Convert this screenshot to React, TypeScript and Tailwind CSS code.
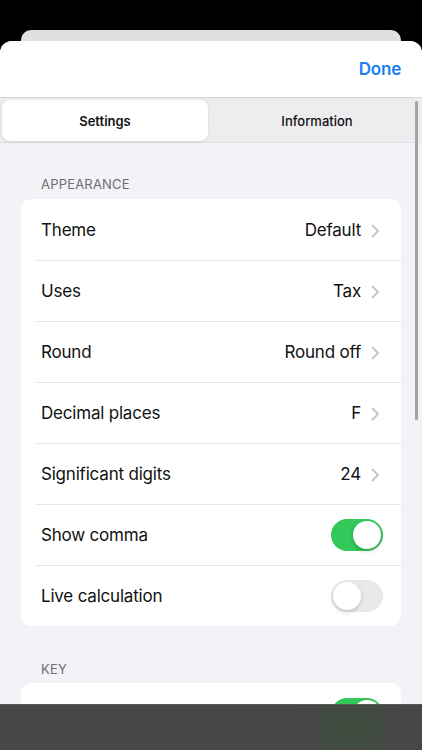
import React from "react";

const Chevron = () => (
  <svg width="9" height="14" viewBox="0 0 9 14" className="ml-[10px]">
    <path d="M1.5 1.5 L7 7 L1.5 12.5" fill="none" stroke="#c4c4c8" strokeWidth="1.8" strokeLinecap="round" strokeLinejoin="round" />
  </svg>
);

const Toggle = ({ on }: { on: boolean }) => (
  <div
    className={`w-[52px] h-[32px] rounded-full p-[2px] flex items-center ${on ? "bg-[#34c759] justify-end" : "bg-[#e9e9eb] justify-start"}`}
  >
    <div className="w-[28px] h-[28px] rounded-full bg-white shadow-[0_2px_4px_rgba(0,0,0,0.18)]" />
  </div>
);

type Row = { label: string; value?: string; toggle?: boolean };

const rows: Row[] = [
  { label: "Theme", value: "Default" },
  { label: "Uses", value: "Tax" },
  { label: "Round", value: "Round off" },
  { label: "Decimal places", value: "F" },
  { label: "Significant digits", value: "24" },
  { label: "Show comma", toggle: true },
  { label: "Live calculation", toggle: false },
];

export default function App() {
  return (
    <div
      className="w-[422px] h-[750px] bg-black relative overflow-hidden flex flex-col"
      style={{ fontFamily: "Inter, 'Noto Sans', sans-serif" }}
    >
      <div className="h-[30px] shrink-0" />
      <div className="mx-[21px] h-[11px] bg-[#e0e0e2] rounded-t-[10px] shrink-0" />
      <div className="flex-1 bg-[#f2f2f7] rounded-t-[12px] overflow-hidden flex flex-col">
        <div className="h-[57px] bg-white flex items-center justify-end pr-[21px] pt-[2px] border-b border-[#d6d6da]">
          <span className="text-[17px] font-semibold text-[#1a7ff0] tracking-[-0.2px]">Done</span>
        </div>
        <div className="h-[45px] bg-[#ededef] p-[2px] flex border-b border-[#e2e2e6]">
          <div className="w-[206px] h-[41px] pt-[3px] bg-white rounded-[8px] shadow-[0_1px_3px_rgba(0,0,0,0.12)] flex items-center justify-center text-[13px] font-semibold text-[#111]">
            Settings
          </div>
          <div className="flex-1 pt-[3px] pl-[6px] flex items-center justify-center text-[13px] font-medium text-[#111]">
            Information
          </div>
        </div>
        <div className="pt-[33px]">
          <div className="px-[41px] text-[13px] leading-[16px] text-[#6d6d72] tracking-[0.2px] mb-[7px]">APPEARANCE</div>
          <div className="mx-[21px] bg-white rounded-[10px] overflow-hidden">
            {rows.map((r, i) => (
              <div key={r.label} className="relative h-[61px] flex items-center pl-[20px] pr-[18px]">
                {i > 0 && <div className="absolute top-0 left-[15px] right-0 h-px bg-[#e6e6ea]" />}
                <span className="flex-1 pt-[3px] text-[17px] text-[#111] tracking-[-0.2px]">{r.label}</span>
                {r.toggle === undefined ? (
                  <div className="flex items-center pr-[3px] pt-[3px]">
                    <span className="text-[17px] text-[#111] tracking-[-0.2px]">{r.value}</span>
                    <Chevron />
                  </div>
                ) : (
                  <Toggle on={r.toggle} />
                )}
              </div>
            ))}
          </div>
          <div className="px-[41px] pt-[35px] text-[13px] leading-[16px] text-[#6d6d72] tracking-[0.2px] mb-[6px]">KEY</div>
          <div className="mx-[21px] bg-white rounded-[10px] overflow-hidden">
            <div className="h-[61px] flex items-center justify-end pr-[18px]">
              <Toggle on={true} />
            </div>
          </div>
        </div>
      </div>
      <div className="absolute left-[415px] top-[101px] w-[3px] h-[319px] rounded-full bg-[#a2a2a8]" />
      <div className="absolute left-0 right-0 bottom-0 h-[46px] bg-[#474747] border-t border-[#5a5a5a] overflow-hidden">
        <div className="absolute left-[320px] top-0 w-[60px] h-[46px] bg-[#3f4d40] blur-[8px]" />
      </div>
    </div>
  );
}
